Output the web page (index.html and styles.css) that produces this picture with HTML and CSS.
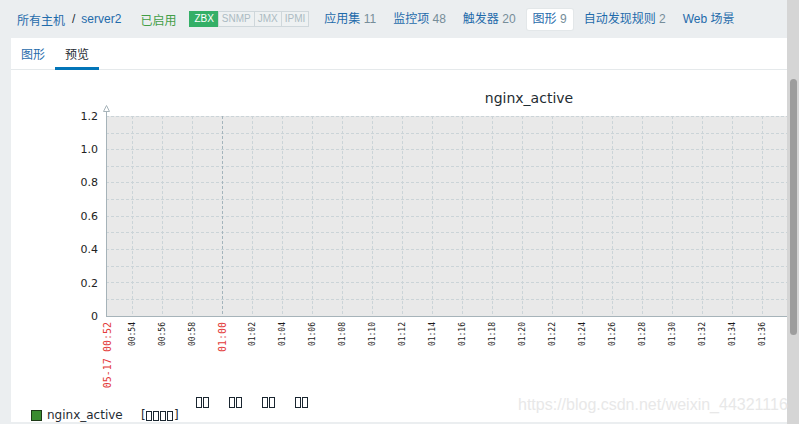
FILE: index.html
```html
<!DOCTYPE html>
<html lang="zh-CN">
<head>
<meta charset="utf-8">
<title>图形 预览</title>
<link rel="stylesheet" href="styles.css">
</head>
<body>
<div class="main">
  <nav class="header">
    <div class="crumbs">
      <a class="link">所有主机</a>
      <span class="sep">/</span>
      <a class="link">server2</a>
    </div>
    <span class="status">已启用</span>
    <div class="badges">
      <span class="badge on">ZBX</span><span class="badge">SNMP</span><span class="badge">JMX</span><span class="badge">IPMI</span>
    </div>
    <ul class="items">
      <li class="item"><a class="link">应用集</a> <span class="count">11</span></li>
      <li class="item"><a class="link">监控项</a> <span class="count">48</span></li>
      <li class="item"><a class="link">触发器</a> <span class="count">20</span></li>
      <li class="item selected"><a class="link">图形</a> <span class="count">9</span></li>
      <li class="item"><a class="link">自动发现规则</a> <span class="count">2</span></li>
      <li class="item"><a class="link">Web 场景</a></li>
    </ul>
  </nav>
  <section class="panel">
    <div class="tabs">
      <a class="tab">图形</a>
      <a class="tab active">预览</a>
    </div>
    <svg class="chart" width="776" height="352" viewBox="11 70 776 352" xmlns="http://www.w3.org/2000/svg">
      <text class="title" x="529" y="103" text-anchor="middle">nginx_active</text>
      <rect x="106" y="116" width="700" height="200" fill="#e9e9e9"/>
      <g class="grid" stroke="#cbd4d8" stroke-width="1" stroke-dasharray="3 2" shape-rendering="crispEdges">
        <line x1="106" y1="116.5" x2="800" y2="116.5"/>
        <line x1="106" y1="133.5" x2="800" y2="133.5"/>
        <line x1="106" y1="149.5" x2="800" y2="149.5"/>
        <line x1="106" y1="166.5" x2="800" y2="166.5"/>
        <line x1="106" y1="182.5" x2="800" y2="182.5"/>
        <line x1="106" y1="199.5" x2="800" y2="199.5"/>
        <line x1="106" y1="216.5" x2="800" y2="216.5"/>
        <line x1="106" y1="232.5" x2="800" y2="232.5"/>
        <line x1="106" y1="249.5" x2="800" y2="249.5"/>
        <line x1="106" y1="266.5" x2="800" y2="266.5"/>
        <line x1="106" y1="282.5" x2="800" y2="282.5"/>
        <line x1="106" y1="299.5" x2="800" y2="299.5"/>
        <line x1="132.5" y1="116" x2="132.5" y2="316"/>
        <line x1="162.5" y1="116" x2="162.5" y2="316"/>
        <line x1="192.5" y1="116" x2="192.5" y2="316"/>
        <line x1="222.5" y1="116" x2="222.5" y2="316" stroke="#a4b4bc"/>
        <line x1="252.5" y1="116" x2="252.5" y2="316"/>
        <line x1="282.5" y1="116" x2="282.5" y2="316"/>
        <line x1="312.5" y1="116" x2="312.5" y2="316"/>
        <line x1="342.5" y1="116" x2="342.5" y2="316"/>
        <line x1="372.5" y1="116" x2="372.5" y2="316"/>
        <line x1="402.5" y1="116" x2="402.5" y2="316"/>
        <line x1="432.5" y1="116" x2="432.5" y2="316"/>
        <line x1="462.5" y1="116" x2="462.5" y2="316"/>
        <line x1="492.5" y1="116" x2="492.5" y2="316"/>
        <line x1="522.5" y1="116" x2="522.5" y2="316"/>
        <line x1="552.5" y1="116" x2="552.5" y2="316"/>
        <line x1="582.5" y1="116" x2="582.5" y2="316"/>
        <line x1="612.5" y1="116" x2="612.5" y2="316"/>
        <line x1="642.5" y1="116" x2="642.5" y2="316"/>
        <line x1="672.5" y1="116" x2="672.5" y2="316"/>
        <line x1="702.5" y1="116" x2="702.5" y2="316"/>
        <line x1="732.5" y1="116" x2="732.5" y2="316"/>
        <line x1="762.5" y1="116" x2="762.5" y2="316"/>
      </g>
      <g stroke="#a6b3b9" stroke-width="1" shape-rendering="crispEdges">
        <line x1="106.5" y1="110" x2="106.5" y2="317"/>
        <line x1="106" y1="316.5" x2="800" y2="316.5"/>
      </g>
      <polygon points="103.5,111.5 109.5,111.5 106.5,105.5" fill="#ffffff" stroke="#a6b3b9" stroke-width="1"/>
      <g class="ylabels" text-anchor="end">
        <text x="98" y="120">1.2</text>
        <text x="98" y="153">1.0</text>
        <text x="98" y="186">0.8</text>
        <text x="98" y="220">0.6</text>
        <text x="98" y="253">0.4</text>
        <text x="98" y="287">0.2</text>
        <text x="98" y="320">0</text>
      </g>
      <g class="xlabels" text-anchor="end">
        <text class="major" transform="translate(110.5 322) rotate(-90)">05-17 00:52</text>
        <text transform="translate(135 322) rotate(-90)">00:54</text>
        <text transform="translate(165 322) rotate(-90)">00:56</text>
        <text transform="translate(195 322) rotate(-90)">00:58</text>
        <text class="major" transform="translate(226 322) rotate(-90)">01:00</text>
        <text transform="translate(255 322) rotate(-90)">01:02</text>
        <text transform="translate(285 322) rotate(-90)">01:04</text>
        <text transform="translate(315 322) rotate(-90)">01:06</text>
        <text transform="translate(345 322) rotate(-90)">01:08</text>
        <text transform="translate(375 322) rotate(-90)">01:10</text>
        <text transform="translate(405 322) rotate(-90)">01:12</text>
        <text transform="translate(435 322) rotate(-90)">01:14</text>
        <text transform="translate(465 322) rotate(-90)">01:16</text>
        <text transform="translate(495 322) rotate(-90)">01:18</text>
        <text transform="translate(525 322) rotate(-90)">01:20</text>
        <text transform="translate(555 322) rotate(-90)">01:22</text>
        <text transform="translate(585 322) rotate(-90)">01:24</text>
        <text transform="translate(615 322) rotate(-90)">01:26</text>
        <text transform="translate(645 322) rotate(-90)">01:28</text>
        <text transform="translate(675 322) rotate(-90)">01:30</text>
        <text transform="translate(705 322) rotate(-90)">01:32</text>
        <text transform="translate(735 322) rotate(-90)">01:34</text>
        <text transform="translate(765 322) rotate(-90)">01:36</text>
      </g>
      <g fill="none" stroke="#1a2630" stroke-width="1" shape-rendering="crispEdges">
        <rect x="196.5" y="397.5" width="5" height="10"/>
        <rect x="203.5" y="397.5" width="5" height="10"/>
        <rect x="229.5" y="397.5" width="5" height="10"/>
        <rect x="236.5" y="397.5" width="5" height="10"/>
        <rect x="262.5" y="397.5" width="5" height="10"/>
        <rect x="269.5" y="397.5" width="5" height="10"/>
        <rect x="295.5" y="397.5" width="5" height="10"/>
        <rect x="302.5" y="397.5" width="5" height="10"/>
        <rect x="146.5" y="411.5" width="5" height="9"/>
        <rect x="153.5" y="411.5" width="5" height="9"/>
        <rect x="160.5" y="411.5" width="5" height="9"/>
        <rect x="167.5" y="411.5" width="5" height="9"/>
      </g>
      <rect x="31.5" y="410.5" width="10" height="10" fill="#3a8c2f" stroke="#1d3a17" stroke-width="1"/>
      <text class="legend" x="47" y="419">nginx_active</text>
      <text class="legend" x="141" y="419">[</text>
      <text class="legend" x="174" y="419">]</text>
    </svg>
  </section>
</div>
<div class="scrollbar"><div class="thumb"></div></div>
<div class="watermark">https://blog.csdn.net/weixin_44321116</div>
</body>
</html>
```
FILE: styles.css
```css
html, body {
  margin: 0;
  padding: 0;
}
body {
  width: 799px;
  height: 424px;
  overflow: hidden;
  display: flex;
  background: #ebeef0;
  font-family: "Liberation Sans", Arial, "Noto Sans CJK SC", sans-serif;
  font-size: 12px;
  color: #1f2c33;
  position: relative;
}
.main {
  width: 787px;
  display: flex;
  flex-direction: column;
}
.header {
  height: 38px;
  display: flex;
  align-items: center;
  padding-left: 17px;
  box-sizing: border-box;
}
.link {
  color: #1f6bab;
  text-decoration: none;
}
.crumbs {
  display: flex;
  align-items: center;
}
.sep {
  margin: 0 6px 0 7px;
  color: #1f2c33;
}
.status {
  margin-left: 19px;
  color: #429e47;
}
.badges {
  display: flex;
  margin-left: 13px;
}
.badge {
  font-size: 10px;
  line-height: 14px;
  padding: 0 3px;
  border: 1px solid #cfd7db;
  margin-left: -1px;
  color: #acbbc2;
  background: #eef1f2;
}
.badge.on {
  margin-left: 0;
  background: #34af67;
  border-color: #34af67;
  color: #ffffff;
  padding: 0 4px;
}
.items {
  list-style: none;
  margin: 0 0 0 9px;
  padding: 0;
  display: flex;
  gap: 5px;
}
.item {
  padding: 0 6px;
  line-height: 21px;
  border-radius: 2px;
}
.item.selected {
  background: #ffffff;
  box-shadow: 0 0 0 1px #e3e7e9;
}
.count {
  color: #768d99;
}
.panel {
  margin-left: 11px;
  height: 384px;
  background: #ffffff;
  display: flex;
  flex-direction: column;
  overflow: hidden;
}
.tabs {
  display: flex;
  border-bottom: 1px solid #e5e9eb;
}
.tab {
  padding: 5px 10px 0;
  line-height: 24px;
  border-bottom: 3px solid transparent;
  margin-bottom: -1px;
  color: #1f6bab;
}
.tab.active {
  color: #1f2c33;
  border-bottom-color: #0275b8;
}
.chart {
  display: block;
  flex: none;
}
.chart text {
  font-family: "DejaVu Sans", sans-serif;
  fill: #1f2c33;
}
.chart .title {
  font-size: 14px;
}
.chart .ylabels text {
  font-size: 11px;
  fill: #222;
}
.chart .xlabels text {
  font-family: "DejaVu Sans Mono", monospace;
  font-size: 8px;
  fill: #1a1a1a;
}
.chart .xlabels text.major {
  font-size: 10px;
  fill: #e33b3b;
}
.chart .legend {
  font-size: 12px;
}
.scrollbar {
  width: 12px;
  height: 424px;
  background: #d5d5d5;
}
.thumb {
  margin: 79px 0 0 3px;
  width: 7px;
  height: 256px;
  border-radius: 4px;
  background: #9d9d9d;
}
.watermark {
  position: absolute;
  left: 518px;
  top: 396px;
  font-family: "Liberation Sans", Arial, sans-serif;
  font-size: 16px;
  color: #e8e8e8;
  white-space: nowrap;
}
```
